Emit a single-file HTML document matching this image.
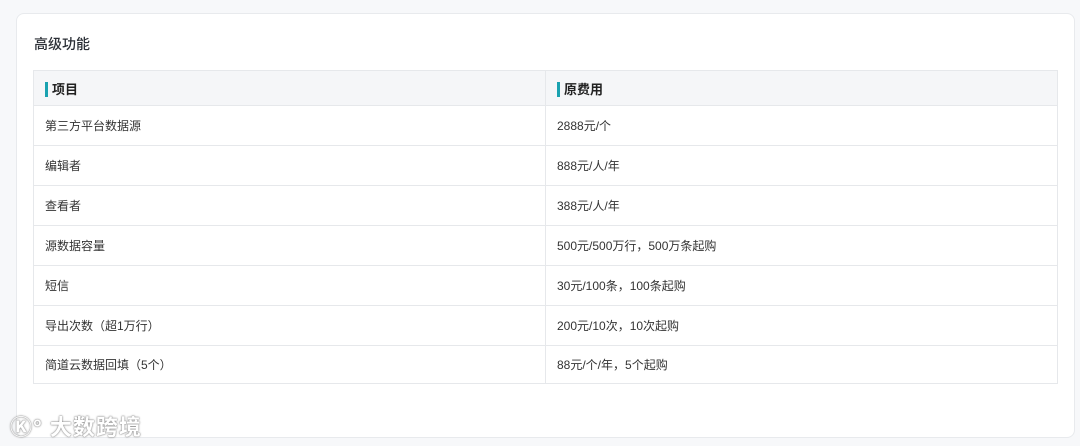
<!DOCTYPE html>
<html><head><meta charset="utf-8"><style>
body{margin:0;width:1080px;height:446px;background:#f7f8fa;font-family:"Liberation Sans","Noto Sans CJK SC",sans-serif;overflow:hidden;position:relative}
.card{position:absolute;left:16px;top:13px;width:1059px;height:425px;background:#fff;border:1px solid #e8eaed;border-radius:8px;box-sizing:border-box}
.title{position:absolute;left:17px;top:20px;font-size:14px;color:#2b2f36;font-weight:500}
table{position:absolute;left:16px;top:56px;width:1025px;border-collapse:collapse;font-size:12px;color:#333}
td,th{border:1px solid #e6e8eb;height:40px;padding:0 0 0 11px;text-align:left;box-sizing:border-box}
th{background:#f5f6f8;height:35px;font-size:13px;font-weight:600;color:#222}
tr:last-child td{height:38px}
th span{border-left:3px solid #1aa2b0;padding-left:4px}
td:first-child,th:first-child{width:512px}
.wm{position:absolute;left:10px;top:410px;font-size:22px;color:#fff;text-shadow:0 0 2px #888,0 0 1px #666;font-weight:700;letter-spacing:1px}
</style></head><body>
<div class="card">
<div class="title">高级功能</div>
<table>
<tr><th><span>项目</span></th><th><span>原费用</span></th></tr>
<tr><td>第三方平台数据源</td><td>2888元/个</td></tr>
<tr><td>编辑者</td><td>888元/人/年</td></tr>
<tr><td>查看者</td><td>388元/人/年</td></tr>
<tr><td>源数据容量</td><td>500元/500万行，500万条起购</td></tr>
<tr><td>短信</td><td>30元/100条，100条起购</td></tr>
<tr><td>导出次数（超1万行）</td><td>200元/10次，10次起购</td></tr>
<tr><td>简道云数据回填（5个）</td><td>88元/个/年，5个起购</td></tr>
</table>
</div>
<div class="wm">Ⓚ° 大数跨境</div>
</body></html>
